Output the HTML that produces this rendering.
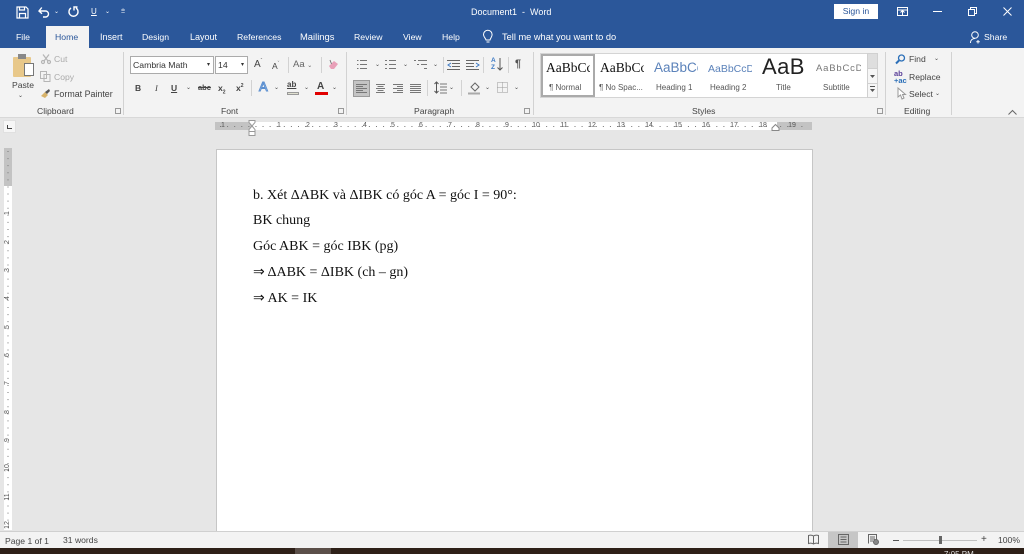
<!DOCTYPE html>
<html lang="vi"><head><meta charset="utf-8"><title>Document1 - Word</title>
<style>
*{box-sizing:border-box}
html,body{margin:0;padding:0;width:1024px;height:554px;overflow:hidden;background:#e6e6e6;font-family:"Liberation Sans",sans-serif}
body{filter:blur(.3px)}
.a{position:absolute;white-space:nowrap}
.t{position:absolute;white-space:nowrap;font-size:8.6px;color:#444;line-height:12px}
.w{color:#fff;font-size:8.7px;line-height:12px;position:absolute;white-space:nowrap}
.g{color:#aaa}
svg{position:absolute;overflow:visible}
.sep{position:absolute;width:1px;background:#d2d2d2}
.r{position:absolute;font-size:7px;color:#555;line-height:8px;top:122px;width:14px;text-align:center}
.d{position:absolute;left:253px;font-family:"Liberation Serif",serif;font-size:14px;line-height:16px;color:#111;white-space:nowrap}
.v{position:absolute;left:1px;width:14px;text-align:center;font-size:7px;line-height:8px;color:#555;transform:rotate(-90deg)}
</style></head><body>
<div class="a" style="left:0;top:0;width:1024px;height:48px;background:#2b579a"></div>
<div class="a" style="left:0;top:48px;width:1024px;height:69px;background:#f3f3f3"></div>
<div class="a" style="left:0;top:117px;width:1024px;height:1px;background:#d8d8d8"></div>
<!-- QAT -->
<svg style="left:16px;top:6px" width="13" height="13" fill="none" stroke="#fff" stroke-width="1.2"><path d="M1 1h9l2 2v9H1zM3.500 1v3h5V1M3.500 12V7.500h6V12"/></svg>
<svg style="left:38px;top:6px" width="12" height="12" fill="none" stroke="#fff" stroke-width="1.4"><path d="M1 5h6.500a3 3 0 0 1 0 6H5M3.800 1.500 1 5l3 2.800"/></svg>
<div class="w" style="left:54px;top:6px;font-size:6px">⌄</div>
<svg style="left:67px;top:6px" width="12" height="12" fill="none" stroke="#fff" stroke-width="1.4"><path d="M4 2a4.500 4.500 0 1 0 5 0M10.500 1H7v3.500"/></svg>
<div class="w" style="left:91px;top:6px;text-decoration:underline;font-size:8px">U</div>
<div class="w" style="left:105px;top:6px;font-size:6px">⌄</div>
<div class="w" style="left:121px;top:6px;font-size:7px">⩧</div>
<div class="w" style="left:471px;top:6px;font-size:9px">Document1 &nbsp;-&nbsp; Word</div>
<div class="a" style="left:834px;top:4px;width:44px;height:15px;background:#fff;color:#2b579a;font-size:8.7px;line-height:15px;text-align:center">Sign in</div>
<svg style="left:897px;top:7px" width="11" height="10" fill="none" stroke="#fff"><path d="M.5.500h10v8H.5zM.5 3h10M5.500 8.500V3.500M3.500 5.500 5.500 3.500 7.500 5.500"/></svg>
<div class="a" style="left:933px;top:11px;width:9px;height:1px;background:#fff"></div>
<svg style="left:968px;top:7px" width="9" height="9" fill="none" stroke="#fff"><path d="M.5 2.500h6v6h-6zM2.500 2.500v-2h6v6h-2"/></svg>
<svg style="left:1003px;top:7px" width="9" height="9" fill="none" stroke="#fff"><path d="M.5.500 8.500 8.500M8.500.500 .5 8.500"/></svg>
<!-- tabs -->
<div class="a" style="left:46px;top:26px;width:43px;height:22px;background:#f3f3f3"></div>
<div class="w" style="left:16px;top:31px">File</div>
<div class="w" style="left:55px;top:31px;color:#2b579a">Home</div>
<div class="w" style="left:100px;top:31px;font-size:9px">Insert</div>
<div class="w" style="left:142px;top:31px">Design</div>
<div class="w" style="left:190px;top:31px;font-size:9px">Layout</div>
<div class="w" style="left:237px;top:31px">References</div>
<div class="w" style="left:300px;top:31px;font-size:9.400px">Mailings</div>
<div class="w" style="left:354px;top:31px">Review</div>
<div class="w" style="left:403px;top:31px">View</div>
<div class="w" style="left:442px;top:31px">Help</div>
<svg style="left:483px;top:30px" width="10" height="14" fill="none" stroke="#fff"><path d="M3 10C2.500 8 .5 7 .5 4.500a4.300 4.300 0 0 1 8.600 0C9.100 7 7.500 8 7 10zM3.500 12h3"/></svg>
<div class="w" style="left:502px;top:31px;font-size:9.250px">Tell me what you want to do</div>
<svg style="left:970px;top:31px" width="11" height="13" fill="none" stroke="#fff"><circle cx="5" cy="4" r="3.300"/><path d="M.5 12c0-3 2-4.500 4.500-4.500M8 9v3.500M6.300 10.800h3.500"/></svg>
<div class="w" style="left:984px;top:31px">Share</div>
<!-- Clipboard -->
<div class="a" style="left:13px;top:57px;width:18px;height:20px;background:#e8c88a;border-radius:1px"></div>
<div class="a" style="left:18px;top:54px;width:8px;height:5px;background:#888"></div>
<div class="a" style="left:24px;top:63px;width:10px;height:13px;background:#fff;border:1px solid #777"></div>
<div class="t" style="left:12px;top:79px">Paste</div>
<div class="t" style="left:18px;top:90px;font-size:6px">⌄</div>
<svg style="left:41px;top:54px" width="10" height="10" fill="none" stroke="#b5b5b5" stroke-width="1.200"><path d="M2 .5 7 7M8 .5 3 7"/><circle cx="2" cy="8" r="1.500"/><circle cx="8" cy="8" r="1.500"/></svg>
<div class="t g" style="left:54px;top:53px">Cut</div>
<svg style="left:40px;top:71px" width="11" height="11" fill="none" stroke="#b5b5b5"><path d="M.5.500h6v7h-6zM4 3.500h6v7H4z"/></svg>
<div class="t g" style="left:54px;top:71px">Copy</div>
<svg style="left:40px;top:88px" width="11" height="11"><path d="M1 8 5 4l3 3-3 3z" fill="#d8b36a"/><path d="M5 4 9 1l1 2-3 3z" fill="#555"/></svg>
<div class="t" style="left:54px;top:88px;font-size:8.900px">Format Painter</div>
<div class="t" style="left:37px;top:105px">Clipboard</div>
<div class="t" style="left:115px;top:105px;font-size:7px;border:1px solid #999;width:6px;height:6px;margin-top:3px"></div>
<div class="sep" style="left:123px;top:52px;height:63px"></div>
<!-- Font -->
<div class="a" style="left:130px;top:56px;width:84px;height:18px;background:#fff;border:1px solid #ababab;font-size:8.7px;line-height:16px;padding-left:2px;color:#333">Cambria Math<span style="position:absolute;right:3px;top:0;font-size:6px">▾</span></div>
<div class="a" style="left:215px;top:56px;width:33px;height:18px;background:#fff;border:1px solid #ababab;font-size:8.7px;line-height:16px;padding-left:2px;color:#333">14<span style="position:absolute;right:3px;top:0;font-size:6px">▾</span></div>
<div class="t" style="left:254px;top:59px;font-size:10px">A<sup style="font-size:5px;line-height:0">ˆ</sup></div>
<div class="t" style="left:272px;top:60px;font-size:8.5px">A<sup style="font-size:5px;line-height:0">ˇ</sup></div>
<div class="sep" style="left:288px;top:57px;height:16px"></div>
<div class="t" style="left:293px;top:59px;font-size:9.500px;color:#666">Aa <span style="font-size:6px">⌄</span></div>
<div class="sep" style="left:321px;top:57px;height:16px"></div>
<svg style="left:327px;top:59px" width="12" height="12"><path d="M2 7 7 2l4 3-4 5H4z" fill="#e8a0b8"/><path d="M3 1l1.500 4" stroke="#777"/></svg>
<div class="t" style="left:135px;top:82px;font-weight:700;font-size:8.5px;color:#444">B</div>
<div class="t" style="left:155px;top:82px;font-style:italic;font-size:8.5px;font-family:'Liberation Serif',serif">I</div>
<div class="t" style="left:171px;top:82px;text-decoration:underline;font-size:8.5px;font-weight:700">U</div>
<div class="t" style="left:186px;top:82px;font-size:6px">⌄</div>
<div class="t" style="left:198px;top:82px;font-size:7.500px;font-weight:700;text-decoration:line-through">abc</div>
<div class="t" style="left:218px;top:82px;font-weight:700">x<sub style="font-size:5px;line-height:0">2</sub></div>
<div class="t" style="left:236px;top:82px;font-weight:700">x<sup style="font-size:5px;line-height:0">2</sup></div>
<div class="sep" style="left:251px;top:80px;height:16px"></div>
<div class="t" style="left:259px;top:81px;font-size:13px;color:#fff;-webkit-text-stroke:1px #5b8fd0">A</div>
<div class="t" style="left:274px;top:82px;font-size:6px">⌄</div>
<div class="t" style="left:287px;top:80px;font-size:8px;font-weight:700;line-height:9px;text-decoration:underline">ab</div>
<div class="a" style="left:287px;top:92px;width:12px;height:3px;background:#e0e0d0;border:1px solid #999"></div>
<div class="t" style="left:304px;top:82px;font-size:6px">⌄</div>
<div class="t" style="left:317px;top:81px;font-size:10px;font-weight:700;line-height:11px">A</div>
<div class="a" style="left:315px;top:92px;width:13px;height:3px;background:#e00000"></div>
<div class="t" style="left:332px;top:82px;font-size:6px">⌄</div>
<div class="t" style="left:221px;top:105px">Font</div>
<div class="a" style="left:338px;top:108px;width:6px;height:6px;border:1px solid #999"></div>
<div class="sep" style="left:346px;top:52px;height:63px"></div>
<!-- Paragraph -->
<svg style="left:356px;top:58px" width="160" height="14" fill="none" stroke="#777"><path d="M4 2.500h7M4 6.500h7M4 10.500h7M1 2.500h1.500M1 6.500h1.500M1 10.500h1.500M33 2.500h7M33 6.500h7M33 10.500h7M29 2.500h2M29 6.500h2M29 10.500h2M62 2.500h9M65 6.500h6M68 10.500h3M58 2.500h2M61 6.500h2"/><path d="M91 2.500h13M96 5.500h8M96 8.500h8M91 11.500h13M110 2.500h13M110 5.500h8M110 8.500h8M110 11.500h13" stroke="#666"/><path d="M95 5 92 7l3 2" stroke="#3a78c4"/><path d="M120 5l3 2-3 2" stroke="#3a78c4"/></svg>
<div class="t" style="left:375px;top:59px;font-size:6px">⌄</div>
<div class="t" style="left:403px;top:59px;font-size:6px">⌄</div>
<div class="t" style="left:433px;top:59px;font-size:6px">⌄</div>
<div class="sep" style="left:443px;top:57px;height:16px"></div>
<div class="sep" style="left:483px;top:57px;height:16px"></div>
<div class="t" style="left:491px;top:57px;font-size:6.500px;line-height:7px;color:#3a78c4;font-weight:700">A<br>Z</div>
<svg style="left:497px;top:58px" width="6" height="13" fill="none" stroke="#555"><path d="M3 0v12M.5 9.500 3 12l2.500-2.500"/></svg>
<div class="sep" style="left:508px;top:57px;height:16px"></div>
<div class="t" style="left:515px;top:58px;font-size:11px;font-weight:700;color:#555">¶</div>
<div class="a" style="left:353px;top:80px;width:17px;height:17px;background:#c4c4c4;border:1px solid #9a9a9a"></div>
<svg style="left:356px;top:83px" width="70" height="11" fill="none" stroke="#777"><path d="M0 1.500h11M0 3.500h7M0 5.500h11M0 7.500h7M0 9.500h11M20 1.500h9M21.500 3.500h6M20 5.500h9M21.500 7.500h6M20 9.500h9M37 1.500h10M41 3.500h6M37 5.500h10M41 7.500h6M37 9.500h10M54 1.500h11M54 3.500h11M54 5.500h11M54 7.500h11M54 9.500h11"/></svg>
<div class="sep" style="left:427px;top:80px;height:16px"></div>
<svg style="left:434px;top:81px" width="13" height="14" fill="none" stroke="#555"><path d="M2.500 1v11M.5 3 2.500 1l2 2M.5 10l2 2 2-2"/><path d="M6 3h7M6 6h7M6 9h7M6 12h7" stroke="#777"/></svg>
<div class="t" style="left:449px;top:82px;font-size:6px">⌄</div>
<div class="sep" style="left:461px;top:80px;height:16px"></div>
<svg style="left:468px;top:81px" width="14" height="14" fill="none" stroke="#666"><path d="M3 6 7 2l4 4-4 4z"/><path d="M0 12.500h12" stroke="#aaa" stroke-width="2"/></svg>
<div class="t" style="left:485px;top:82px;font-size:6px">⌄</div>
<svg style="left:497px;top:82px" width="12" height="12" fill="none" stroke="#999" stroke-dasharray="1 1"><path d="M.5.500h10v10H.5zM5.500.5v10M.5 5.500h10"/></svg>
<div class="t" style="left:514px;top:82px;font-size:6px">⌄</div>
<div class="t" style="left:414px;top:105px">Paragraph</div>
<div class="a" style="left:524px;top:108px;width:6px;height:6px;border:1px solid #999"></div>
<div class="sep" style="left:533px;top:52px;height:63px"></div>
<!-- Styles -->
<div class="a" style="left:540px;top:53px;width:338px;height:45px;background:#fff;border:1px solid #d4d4d4"></div>
<div class="a" style="left:541px;top:54px;width:54px;height:43px;border:2px solid #aaa;background:#fff"></div>
<div class="a" style="left:546px;top:60px;width:44px;overflow:hidden;font-family:'Liberation Serif',serif;font-size:13.500px;line-height:16px;color:#111">AaBbCc</div>
<div class="t" style="left:549px;top:82px;font-size:8px;color:#555">¶ Normal</div>
<div class="a" style="left:600px;top:60px;width:44px;overflow:hidden;font-family:'Liberation Serif',serif;font-size:13.500px;line-height:16px;color:#111">AaBbCc</div>
<div class="t" style="left:599px;top:82px;font-size:8px;color:#555">¶ No Spac...</div>
<div class="a" style="left:654px;top:60px;width:44px;overflow:hidden;font-size:13.500px;line-height:16px;color:#5b82ba">AaBbCc</div>
<div class="t" style="left:656px;top:82px;font-size:8px;color:#555">Heading 1</div>
<div class="a" style="left:708px;top:61px;width:44px;overflow:hidden;font-size:10.500px;line-height:16px;color:#5b82ba">AaBbCcD</div>
<div class="t" style="left:710px;top:82px;font-size:8px;color:#555">Heading 2</div>
<div class="a" style="left:762px;top:54px;width:44px;overflow:hidden;font-size:22px;letter-spacing:.4px;line-height:26px;color:#222">AaB</div>
<div class="t" style="left:776px;top:82px;font-size:8px;color:#555">Title</div>
<div class="a" style="left:816px;top:61px;width:45px;overflow:hidden;font-size:9.500px;letter-spacing:.8px;line-height:16px;color:#777">AaBbCcD</div>
<div class="t" style="left:823px;top:82px;font-size:8px;color:#555">Subtitle</div>
<div class="a" style="left:867px;top:53px;width:11px;height:45px;background:#f6f6f6;border:1px solid #d0d0d0"></div>
<div class="a" style="left:868px;top:54px;width:9px;height:14px;background:#dedede"></div>
<div class="a" style="left:867px;top:68px;width:11px;height:1px;background:#d0d0d0"></div>
<div class="a" style="left:867px;top:83px;width:11px;height:1px;background:#d0d0d0"></div>
<svg style="left:869px;top:73px" width="8" height="22"><path d="M1 2h5L3.500 5z" fill="#555"/><path d="M1 13.500h5" stroke="#555"/><path d="M1 16h5L3.500 19z" fill="#555"/></svg>
<div class="t" style="left:692px;top:105px">Styles</div>
<div class="a" style="left:877px;top:108px;width:6px;height:6px;border:1px solid #999"></div>
<div class="sep" style="left:885px;top:52px;height:63px"></div>
<!-- Editing -->
<svg style="left:895px;top:54px" width="11" height="11" fill="none" stroke="#2b6fb8" stroke-width="1.300"><circle cx="6.500" cy="4" r="3"/><path d="M4 6.500 1 9.500" stroke-width="2"/></svg>
<div class="t" style="left:909px;top:53px">Find</div>
<div class="t" style="left:934px;top:53px;font-size:6px">⌄</div>
<div class="t" style="left:894px;top:70px;font-size:7.500px;line-height:7px;color:#5a3f98;font-weight:700">ab<br><span style="color:#2b6fb8">+ac</span></div>
<div class="t" style="left:909px;top:71px">Replace</div>
<svg style="left:897px;top:87px" width="9" height="13" fill="#fff" stroke="#999"><path d="M1 1v9l2.500-2 1.500 4 2-1-1.500-3.500H8.500z"/></svg>
<div class="t" style="left:909px;top:88px">Select</div>
<div class="t" style="left:935px;top:88px;font-size:6px">⌄</div>
<div class="t" style="left:904px;top:105px">Editing</div>
<div class="sep" style="left:951px;top:52px;height:63px"></div>
<svg style="left:1008px;top:110px" width="9" height="5" fill="none" stroke="#666"><path d="M.5 4.500 4.500.5l4 4"/></svg>
<!-- ruler -->
<div class="a" style="left:3px;top:120px;width:13px;height:13px;background:#f6f6f6;border:1px solid #e0e0e0"></div>
<svg style="left:7px;top:125px" width="5" height="4" fill="none" stroke="#444"><path d="M.5 0v3.500H5"/></svg>
<div class="a" style="left:215px;top:122px;width:597px;height:8px;background:#fff"></div>
<div class="a" style="left:215px;top:122px;width:37px;height:8px;background:#c3c3c3"></div>
<div class="a" style="left:777px;top:122px;width:35px;height:8px;background:#c3c3c3"></div>
<div class="r" style="left:216px">1</div><div class="r" style="left:272px">1</div><div class="r" style="left:301px">2</div><div class="r" style="left:329px">3</div><div class="r" style="left:358px">4</div><div class="r" style="left:386px">5</div><div class="r" style="left:414px">6</div><div class="r" style="left:443px">7</div><div class="r" style="left:471px">8</div><div class="r" style="left:500px">9</div><div class="r" style="left:529px">10</div><div class="r" style="left:557px">11</div><div class="r" style="left:585px">12</div><div class="r" style="left:614px">13</div><div class="r" style="left:642px">14</div><div class="r" style="left:671px">15</div><div class="r" style="left:699px">16</div><div class="r" style="left:727px">17</div><div class="r" style="left:756px">18</div><div class="r" style="left:785px">19</div>
<svg style="left:215px;top:122px" width="597" height="8" stroke="#777" fill="none"><path stroke-dasharray="1 6.090" d="M5 4.500H592" /></svg>
<svg style="left:248px;top:120px" width="9" height="17" fill="#fff" stroke="#999"><path d="M1 .5h6v2L4 6 1 2.500zM4 6l3 3.500v2H1v-2zM1 11.500h6v4H1z"/></svg>
<svg style="left:771px;top:124px" width="9" height="7" fill="#fff" stroke="#888"><path d="M4.500.5 8 4v2.500H1V4z"/></svg>
<!-- vertical ruler -->
<div class="a" style="left:4px;top:148px;width:8px;height:382px;background:#fff"></div>
<div class="a" style="left:4px;top:148px;width:8px;height:38px;background:#c3c3c3"></div>
<svg style="left:4px;top:148px" width="8" height="382" stroke="#777" fill="none"><path stroke-dasharray="1 6.090" d="M4 3V380"/></svg>
<div class="v" style="top:209px">1</div><div class="v" style="top:238px">2</div><div class="v" style="top:266px">3</div><div class="v" style="top:294px">4</div><div class="v" style="top:323px">5</div><div class="v" style="top:351px">6</div><div class="v" style="top:379px">7</div><div class="v" style="top:408px">8</div><div class="v" style="top:436px">9</div><div class="v" style="top:464px">10</div><div class="v" style="top:493px">11</div><div class="v" style="top:521px">12</div>
<!-- page -->
<div class="a" style="left:216px;top:149px;width:597px;height:383px;background:#fff;border:1px solid #c6c6c6;border-bottom:0"></div>
<div class="d" style="top:188px">b. Xét ΔABK và ΔIBK có góc A = góc I = 90°:</div>
<div class="d" style="top:213px">BK chung</div>
<div class="d" style="top:239px">Góc ABK = góc IBK (pg)</div>
<div class="d" style="top:265px">⇒ ΔABK = ΔIBK (ch – gn)</div>
<div class="d" style="top:291px">⇒ AK = IK</div>
<!-- status -->
<div class="a" style="left:0;top:531px;width:1024px;height:1px;background:#d0d0d0"></div>
<div class="a" style="left:0;top:532px;width:1024px;height:16px;background:#f3f3f3"></div>
<div class="t" style="left:5px;top:535px">Page 1 of 1</div>
<div class="t" style="left:63px;top:534px">31 words</div>
<svg style="left:808px;top:534px" width="11" height="11" fill="none" stroke="#666"><path d="M5.500 2C4 1 2 1 .5 1.500v8C2 9 4 9 5.500 10c1.500-1 3.500-1 5-.5v-8C9 1 7 1 5.500 2zM5.500 2v8"/></svg>
<div class="a" style="left:828px;top:532px;width:30px;height:16px;background:#c6c6c6"></div>
<svg style="left:838px;top:534px" width="11" height="11" fill="none" stroke="#666"><path d="M.5.500h10v10H.5zM2.500 3h6M2.500 5.500h6M2.500 8h6"/></svg>
<svg style="left:868px;top:534px" width="11" height="11" fill="none" stroke="#666"><path d="M.5 9.500V.5h8v5M2 3h5M2 5h5M2 7h3"/><circle cx="8" cy="8" r="2.500" fill="#888"/></svg>
<div class="a" style="left:893px;top:540px;width:6px;height:1px;background:#555"></div>
<div class="a" style="left:903px;top:540px;width:74px;height:1px;background:#c0c0c0"></div>
<div class="a" style="left:939px;top:536px;width:3px;height:8px;background:#666"></div>
<div class="t" style="left:981px;top:534px;font-size:10px">+</div>
<div class="t" style="left:998px;top:534px">100%</div>
<!-- taskbar -->
<div class="a" style="left:0;top:548px;width:1024px;height:6px;background:#2e2018"></div>
<div class="a" style="left:295px;top:548px;width:36px;height:6px;background:#5b4f49"></div>
<div class="a" style="left:944px;top:550px;font-size:8px;line-height:10px;color:#ddd">7:05 PM</div>
</body></html>
